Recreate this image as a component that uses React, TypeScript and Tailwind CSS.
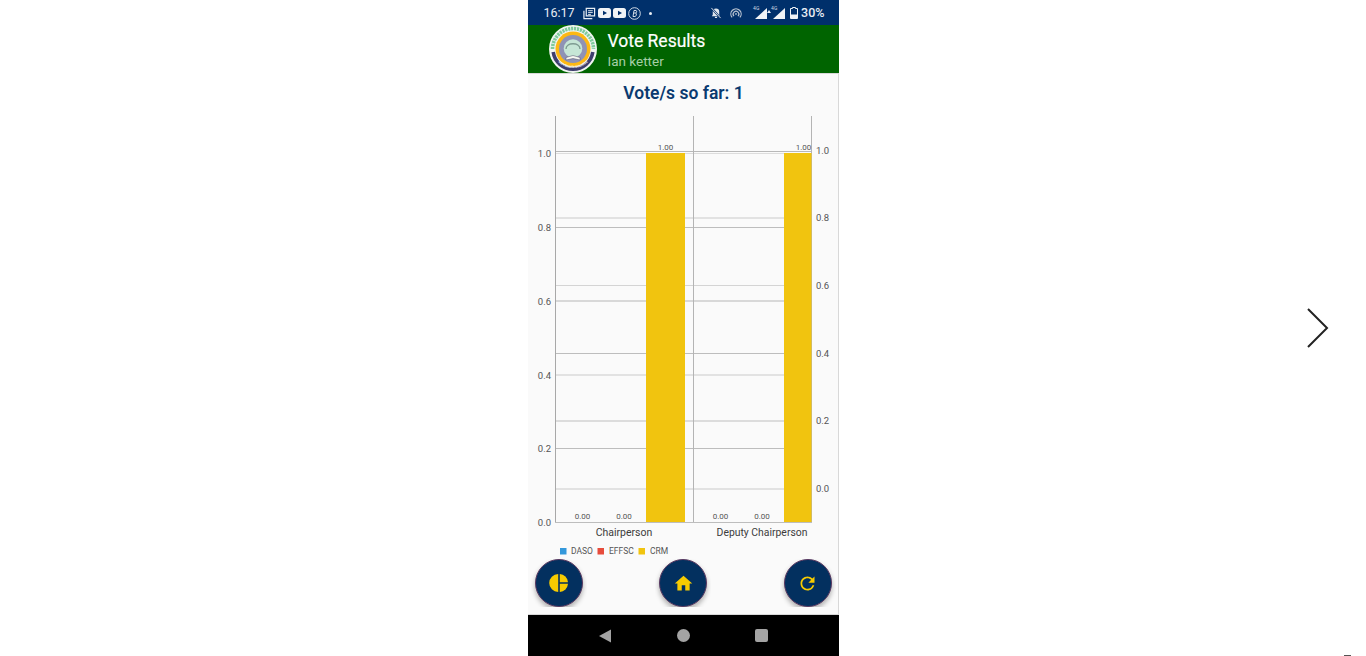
import { MdHome, MdRefresh } from "react-icons/md";

const leftTicks = [
  { label: "1.0", y: 153 },
  { label: "0.8", y: 227 },
  { label: "0.6", y: 301 },
  { label: "0.4", y: 375 },
  { label: "0.2", y: 448 },
];
const rightTicks = [
  { label: "1.0", y: 152 },
  { label: "0.8", y: 219.5 },
  { label: "0.6", y: 287.5 },
  { label: "0.4", y: 355 },
  { label: "0.2", y: 422.5 },
  { label: "0.0", y: 490 },
];
// the grid lines of the two axes, some crisp and some smeared over two pixels
const gridLines = [
  { y: 151, h: 1, color: "#b8b8b8" },
  { y: 153, h: 1, color: "#dcdcdc" },
  { y: 217, h: 2, color: "#e2e2e2" },
  { y: 227, h: 1, color: "#bdbdbd" },
  { y: 285, h: 1, color: "#d4d4d4" },
  { y: 300, h: 2, color: "#d8d8d8" },
  { y: 353, h: 1, color: "#bdbdbd" },
  { y: 374, h: 2, color: "#e2e2e2" },
  { y: 420, h: 2, color: "#dcdcdc" },
  { y: 448, h: 1, color: "#bdbdbd" },
  { y: 488, h: 2, color: "#e2e2e2" },
];
const valueLabels = [
  { text: "0.00", x: 582.5, y: 519 },
  { text: "0.00", x: 624, y: 519 },
  { text: "1.00", x: 665.5, y: 150 },
  { text: "0.00", x: 720.5, y: 519 },
  { text: "0.00", x: 762, y: 519 },
  { text: "1.00", x: 803.5, y: 150 },
];

const Chart = () => (
  <svg viewBox="528 110 311 450" className="block h-[450px] w-[311px]" fontFamily="Roboto, sans-serif">
    {gridLines.map((g) => (
      <rect key={g.y} x="555" y={g.y} width="257" height={g.h} fill={g.color} />
    ))}
    <line x1="555.5" x2="555.5" y1="116" y2="522" stroke="#a8a8a8" />
    <line x1="693.5" x2="693.5" y1="116" y2="522" stroke="#b4b4b4" />
    <line x1="811.5" x2="811.5" y1="116" y2="522" stroke="#b4b4b4" />
    <line x1="555" x2="812" y1="522.5" y2="522.5" stroke="#bdbdbd" />
    <rect x="646" y="153" width="39" height="369" fill="#f1c40f" />
    <rect x="784" y="153" width="27.5" height="369" fill="#f1c40f" />
    {leftTicks.map((t) => (
      <text key={t.y} x="551" y={t.y + 3.5} textAnchor="end" fontSize="9.5" fill="#555555">
        {t.label}
      </text>
    ))}
    <text x="551" y="525.5" textAnchor="end" fontSize="9.5" fill="#555555">
      0.0
    </text>
    {rightTicks.map((t) => (
      <text key={t.y} x="816" y={t.y + 1.5} fontSize="9.5" fill="#555555">
        {t.label}
      </text>
    ))}
    {valueLabels.map((v) => (
      <text key={v.x} x={v.x} y={v.y} textAnchor="middle" fontSize="8" fill="#555555">
        {v.text}
      </text>
    ))}
    <text x="624" y="536" textAnchor="middle" fontSize="10.5" fill="#3c3c3c">
      Chairperson
    </text>
    <text x="762" y="536" textAnchor="middle" fontSize="10.4" fill="#3c3c3c">
      Deputy Chairperson
    </text>
    <rect x="560" y="548" width="6.5" height="6.5" fill="#3498db" />
    <text x="571" y="554" fontSize="8.5" fill="#555555">
      DASO
    </text>
    <rect x="597.5" y="548" width="6.5" height="6.5" fill="#e74c3c" />
    <text x="609" y="554" fontSize="8.5" fill="#555555">
      EFFSC
    </text>
    <rect x="638.5" y="548" width="6.5" height="6.5" fill="#f1c40f" />
    <text x="650" y="554" fontSize="8.5" fill="#555555">
      CRM
    </text>
  </svg>
);

const Logo = () => (
  <svg viewBox="0 0 48 48" className="h-12 w-12 shrink-0">
    <defs>
      <path id="logo-bottom" d="M3.2 25A21 21 0 0 0 44.8 25" />
    </defs>
    <circle cx="24" cy="24" r="24" fill="#f1f5f1" />
    <path d="M3.5 24A20.5 20.5 0 0 1 44.5 24" fill="none" stroke="#7fcb9c" strokeWidth="3.6" strokeDasharray="2.2 0.8" />
    <path d="M4.2 27A20 20 0 0 0 43.8 27" fill="none" stroke="#3e3e6e" strokeWidth="3.6" />
    <circle cx="24" cy="24" r="17.5" fill="#fdb813" />
    <circle cx="24" cy="24" r="14" fill="#8f93b5" />
    <circle cx="24" cy="23.5" r="9.3" fill="#c6e6d6" />
    <path d="M17 24C17 17 31 17 31 24" fill="none" stroke="#7d9b90" strokeWidth="1.4" />
    <path d="M17 32.5L24 30.5L31 32.5V35L24 33.5L17 35Z" fill="#f7f7f2" stroke="#4c4e66" strokeWidth="0.5" />
    <text fontSize="3.2" fontWeight="700" fill="#f3f3f3" fontFamily="Roboto, sans-serif">
      <textPath href="#logo-bottom" startOffset="50%" textAnchor="middle">
        UNIVERSITY COLLEGE
      </textPath>
    </text>
  </svg>
);

const YoutubeBadge = () => (
  <svg viewBox="0 0 13 10" className="h-[10px] w-[13px]">
    <rect width="13" height="10" rx="2.5" fill="#f0f3f6" />
    <path d="M5 2.8V7.2L9 5Z" fill="#00306b" />
  </svg>
);

const StatusLeft = () => (
  <div className="flex items-center gap-[2px]">
    <svg viewBox="0 0 14 14" className="h-[13px] w-[13px]" fill="none" stroke="#e8edf3" strokeWidth="1.3">
      <path d="M3.5 1.5H12.5V9.5H3.5Z" />
      <path d="M1 4V12.5H10" />
      <path d="M5.5 4H10.5M5.5 6H10.5M5.5 8H8.5" strokeWidth="1" />
    </svg>
    <YoutubeBadge />
    <YoutubeBadge />
    <svg viewBox="0 0 13 13" className="h-[13px] w-[13px]" fill="none" stroke="#e8edf3" strokeWidth="0.9">
      <circle cx="6.5" cy="6.5" r="5.8" />
      <path d="M5 9.5L6 3.5H8C9 3.5 9 6 7.5 6H5.8M7.5 6C9 6 8.5 9.5 7 9.5H5" />
    </svg>
    <span className="ml-[6px] h-[3px] w-[3px] rounded-full bg-[#e8edf3]" />
  </div>
);

const Signal = ({ label }: { label: string }) => (
  <div className="relative h-[11px] w-[14px]">
    <span className="absolute left-0 top-[-2px] text-[5px] leading-none text-[#cfd8e2]">{label}</span>
    <svg viewBox="0 0 12 11" className="absolute bottom-0 right-0 h-[11px] w-3">
      <path d="M12 0V11H0Z" fill="#f0f3f6" />
    </svg>
  </div>
);

const StatusRight = () => (
  <div className="flex items-center">
    <svg viewBox="0 0 13 13" className="h-3 w-3" fill="#dfe5ec">
      <path d="M6.5 1.5A3.5 3.5 0 0 1 10 5V8.5L11 10H2L3 8.5V5A3.5 3.5 0 0 1 6.5 1.5Z" />
      <rect x="5.3" y="10.5" width="2.4" height="1.5" rx="0.7" />
      <path d="M1.5 1L11.5 12" stroke="#00306b" strokeWidth="2.2" />
      <path d="M1.5 1L11.5 12" stroke="#dfe5ec" strokeWidth="1" />
    </svg>
    <svg viewBox="0 0 14 12" className="ml-[8px] h-[11px] w-3" fill="none" stroke="#b9c4d2" strokeWidth="1.4">
      <path d="M2.5 10.5A6 6 0 1 1 11.5 10.5" />
      <path d="M4.6 9A3.3 3.3 0 1 1 9.4 9" />
      <circle cx="7" cy="6.5" r="1" fill="#b9c4d2" stroke="none" />
    </svg>
    <div className="ml-[11px] flex items-end">
      <Signal label="4G" />
      <span className="mx-0 mb-[6px] h-0 w-0 border-x-[2px] border-b-[3px] border-x-transparent border-b-[#e8edf3]" />
      <Signal label="4G" />
    </div>
    <svg viewBox="0 0 8 12" className="ml-[5px] h-3 w-2">
      <path d="M2.5 0.5H5.5V1.5H7.5V11.5H0.5V1.5H2.5Z" fill="none" stroke="#f0f3f6" />
      <rect x="1" y="7.5" width="6" height="4" fill="#f0f3f6" />
    </svg>
    <span className="ml-[3px] text-[12.5px] font-medium leading-none text-[#e8edf3]">30%</span>
  </div>
);

const FabButton = ({ children }: { children: React.ReactNode }) => (
  <div className="h-12 overflow-hidden px-1">
    <button className="flex h-12 w-12 items-center justify-center rounded-full border border-[#5b3a62] bg-[#03305f] shadow-[0_3px_5px_rgba(0,0,0,0.3)]">
      {children}
    </button>
  </div>
);

const App = () => {
  return (
    <div className="relative flex h-[656px] w-full justify-center overflow-hidden bg-white font-['Roboto',sans-serif]">
      {/* Phone */}
      <div className="flex h-[656px] w-[311px] flex-col">
        <div className="flex h-[25px] shrink-0 items-center justify-between bg-[#00306b] pl-4 pr-[14px] pt-px">
          <div className="flex items-center gap-[8px]">
            <span className="text-[12.5px] leading-none text-[#e8edf3]">16:17</span>
            <StatusLeft />
          </div>
          <StatusRight />
        </div>

        <div className="flex h-[48px] shrink-0 items-center bg-[#006400] pl-[21px]">
          <Logo />
          <div className="ml-[11px] mt-1 flex flex-col">
            <span className="text-[17.5px] leading-[20px] text-white [-webkit-text-stroke:0.2px_white]">Vote Results</span>
            <span className="text-[13.5px] leading-[20px] text-[#a6cfa6]">Ian ketter</span>
          </div>
        </div>

        <div className="flex h-[542px] shrink-0 flex-col border-r border-b border-t border-[#d8d8d8] bg-[#fafafa]">
          <p className="mt-[7px] h-[29px] w-[312px] text-center text-[17.5px] font-semibold leading-[24px] text-[#0a3a70]">
            Vote/s so far: 1
          </p>
          <Chart />
          <div className="mt-[-1px] flex justify-between pl-[3px] pr-[2px]">
            <FabButton>
              <svg viewBox="0 0 24 24" className="h-6 w-6" fill="#f7cb00">
                <path d="M11.2 3V21A9 9 0 0 1 11.2 3Z" />
                <path d="M12.8 3A9 9 0 0 1 21 11.2H12.8Z" />
                <path d="M12.8 12.8H21A9 9 0 0 1 12.8 21Z" />
              </svg>
            </FabButton>
            <FabButton>
              <MdHome className="h-[21px] w-[21px] text-[#f7cb00]" />
            </FabButton>
            <FabButton>
              <MdRefresh className="h-[21px] w-[21px] text-[#f7cb00]" />
            </FabButton>
          </div>
        </div>

        <div className="flex flex-1 items-center bg-black">
          <svg viewBox="0 0 14 14" className="ml-[70px] h-[14px] w-[14px]" fill="#a3a3a3">
            <path d="M13 0.5V13.5L1 7Z" />
          </svg>
          <span className="ml-[65px] h-[13px] w-[13px] rounded-full bg-[#a3a3a3]" />
          <span className="ml-[65px] h-[13px] w-[13px] rounded-[2px] bg-[#a3a3a3]" />
        </div>
      </div>

      {/* Next arrow */}
      <svg viewBox="0 0 24 42" className="absolute left-[1306px] top-[307px] h-[42px] w-6" fill="none" stroke="#222222" strokeWidth="2">
        <path d="M2 2L21 21L2 40" />
      </svg>
      <span className="absolute bottom-0 left-[1344px] h-px w-[7px] bg-[#555555]" />
    </div>
  );
};

export default App;
